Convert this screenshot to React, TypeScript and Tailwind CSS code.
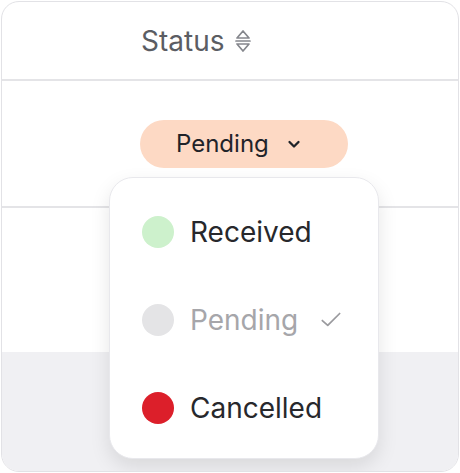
import React from "react";

function SortIcon() {
  return (
    <svg width="18" height="26" viewBox="0 0 18 26" fill="none" stroke="#85878d" strokeWidth="1.7" strokeLinejoin="round" strokeLinecap="round">
      <path d="M9 3 L15 10 L3 10 Z" />
      <path d="M2 13 L16 13" />
      <path d="M3 16 L15 16 L9 23 Z" />
    </svg>
  );
}

function Chevron() {
  return (
    <svg width="14" height="14" viewBox="0 0 14 14" fill="none" stroke="#1f2329" strokeWidth="2.3" strokeLinecap="round" strokeLinejoin="round">
      <path d="M2.5 5 L7 9.5 L11.5 5" />
    </svg>
  );
}

function Check() {
  return (
    <svg width="26" height="26" viewBox="0 0 24 24" fill="none" stroke="#9a9a9e" strokeWidth="1.6" strokeLinecap="round" strokeLinejoin="round">
      <path d="M4 12.5 L9 17 L20 6" />
    </svg>
  );
}

export default function App() {
  return (
    <div className="w-[460px] h-[473px] bg-white p-px" style={{ fontFamily: "Inter, 'Noto Sans', sans-serif" }}>
      <div className="relative w-full h-full rounded-[18px] border border-[#e2e2e6] overflow-hidden flex flex-col">
        <div className="h-[79px] border-b-2 border-[#e4e4e7] flex items-center pl-[139px] gap-[10px]">
          <span className="text-[28px] text-[#5b5d63] leading-none">Status</span>
          <SortIcon />
        </div>
        <div className="h-[127px] border-b-2 border-[#e4e4e7] flex items-center pl-[138px]">
          <div className="w-[208px] h-[48px] rounded-full bg-[#fdd9c4] flex items-center pl-[36px] gap-[18px]">
            <span className="text-[24px] text-[#1f2329] leading-none">Pending</span>
            <Chevron />
          </div>
        </div>
        <div className="h-[144px]"></div>
        <div className="flex-1 bg-[#f0f0f3]"></div>

        <div className="absolute left-[107px] top-[175px] w-[270px] h-[282px] bg-white rounded-[24px] border border-[#e8e8ec] shadow-[0_8px_20px_rgba(0,0,0,0.10)] pt-[10px] pl-[32px]">
          <div className="h-[88px] flex items-center gap-[16px]">
            <span className="w-[32px] h-[32px] rounded-full bg-[#cdf1cc]"></span>
            <span className="text-[28px] text-[#27282c] leading-none">Received</span>
          </div>
          <div className="h-[88px] flex items-center gap-[16px]">
            <span className="w-[32px] h-[32px] rounded-full bg-[#e4e4e6]"></span>
            <span className="text-[28px] text-[#a6a6aa] leading-none">Pending</span>
            <span className="ml-[4px]"><Check /></span>
          </div>
          <div className="h-[88px] flex items-center gap-[16px]">
            <span className="w-[32px] h-[32px] rounded-full bg-[#dc1f2a]"></span>
            <span className="text-[28px] text-[#27282c] leading-none">Cancelled</span>
          </div>
        </div>
      </div>
    </div>
  );
}
